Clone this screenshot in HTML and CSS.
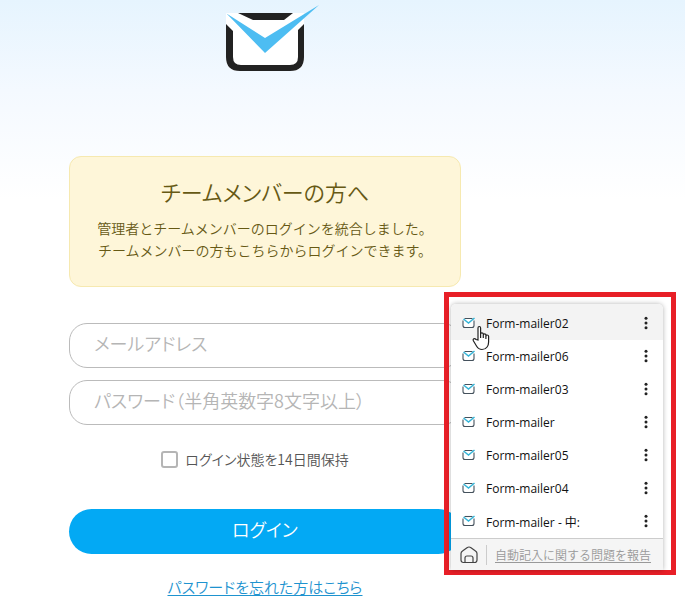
FILE: index.html
```
<!DOCTYPE html>
<html lang="ja">
<head>
    <meta charset="UTF-8">
    <meta name="viewport" content="width=device-width, initial-scale=1.0">
    <title>ログイン</title>
    <link rel="stylesheet" href="styles.css">
</head>
<body>
<svg class="symbols" width="0" height="0">
    <symbol id="mail" viewBox="0 0 14 12">
        <path d="M1 4v4.500q0 2 2 2h7q2 0 2-2V4L10.500 1.500h-8z" fill="#fff"/>
        <path d="M1 3.500v5q0 2 2 2h7q2 0 2-2v-5" fill="none" stroke="#44515c" stroke-width="1.100"/>
        <path d="M2.500 1.500h8" stroke="#44515c" stroke-width="1.100"/>
        <path d="M1.500 2l5 4L12.500 1" fill="none" stroke="#35b5d8" stroke-width="1.500"/>
    </symbol>
    <symbol id="dots" viewBox="0 0 4 14">
        <circle cx="2" cy="2.200" r="1.500"/>
        <circle cx="2" cy="7" r="1.500"/>
        <circle cx="2" cy="11.800" r="1.500"/>
    </symbol>
</svg>
<main class="page">
    <header class="logo">
        <svg width="108" height="72" viewBox="0 0 108 72">
            <path d="M15 13h78v44q0 14-12 14H27Q15 71 15 57z" fill="#fff"/>
            <path d="M27 13h55l-9 7H42z" fill="#222"/>
            <path d="M15 24l7 7v26q0 8 8 8h49q8 0 8-8V30l6-6v33q0 14-14 14H29Q15 71 15 57z" fill="#222"/>
            <path d="M15.500 13.500L54 38 108 5 54 53z" fill="#4dbdf2"/>
        </svg>
    </header>
    <section class="notice">
        <h1>チームメンバーの方へ</h1>
        <p>管理者とチームメンバーのログインを統合しました。<br>チームメンバーの方もこちらからログインできます。</p>
    </section>
    <form class="login">
        <input type="text" class="field" placeholder="メールアドレス" aria-label="メールアドレス">
        <input type="password" class="field" placeholder="パスワード（半角英数字8文字以上）" aria-label="パスワード">
        <div class="keep">
            <input type="checkbox" id="keep">
            <label for="keep">ログイン状態を14日間保持</label>
        </div>
        <button type="button" class="submit">ログイン</button>
        <a href="#" class="forgot">パスワードを忘れた方はこちら</a>
    </form>
</main>

<!-- 自動入力の候補 -->
<div class="frame">
    <div class="menu">
        <ul>
            <li class="on"><svg class="mail"><use href="#mail"/></svg><button type="button" class="name">Form-mailer02</button><button type="button" class="more" aria-label="メニュー"><svg><use href="#dots"/></svg></button></li>
            <li><svg class="mail"><use href="#mail"/></svg><button type="button" class="name">Form-mailer06</button><button type="button" class="more" aria-label="メニュー"><svg><use href="#dots"/></svg></button></li>
            <li><svg class="mail"><use href="#mail"/></svg><button type="button" class="name">Form-mailer03</button><button type="button" class="more" aria-label="メニュー"><svg><use href="#dots"/></svg></button></li>
            <li><svg class="mail"><use href="#mail"/></svg><button type="button" class="name">Form-mailer</button><button type="button" class="more" aria-label="メニュー"><svg><use href="#dots"/></svg></button></li>
            <li><svg class="mail"><use href="#mail"/></svg><button type="button" class="name">Form-mailer05</button><button type="button" class="more" aria-label="メニュー"><svg><use href="#dots"/></svg></button></li>
            <li><svg class="mail"><use href="#mail"/></svg><button type="button" class="name">Form-mailer04</button><button type="button" class="more" aria-label="メニュー"><svg><use href="#dots"/></svg></button></li>
            <li><svg class="mail"><use href="#mail"/></svg><button type="button" class="name">Form-mailer - 中:</button><button type="button" class="more" aria-label="メニュー"><svg><use href="#dots"/></svg></button></li>
        </ul>
        <div class="foot">
            <svg class="home" width="18" height="18" viewBox="0 0 18 18">
                <path d="M1 7.500Q1 6 2.500 5L7 1.700q2-1.400 4 0L15.500 5Q17 6 17 7.500V14q0 2.500-2.500 2.500h-11Q1 16.500 1 14z"/>
                <path d="M5 16.500V12q0-2 2-2h4q2 0 2 2v4.500"/>
            </svg>
            <a href="#">自動記入に関する問題を報告</a>
        </div>
    </div>
    <svg class="cursor" width="19" height="26" viewBox="0 0 19 26">
        <path d="M6 15V3q0-1.500 1.300-1.500T8.600 3v6q0-1.200 1.300-1.200T11.300 9v1q0-1.200 1.300-1.200T13.900 10v1.200q0-1.200 1.300-1.200t1.400 1.300V17q0 3-1.500 5-1.700 2.500-5.100 2.500T4.500 21L1.500 16q-.8-1.500.3-2.200 1-.6 2.300.7z"/>
        <path d="M8.600 9v4M11.300 10v3M13.900 11v3"/>
    </svg>
</div>
</body>
</html>
```
FILE: styles.css
```
*{
    box-sizing: border-box;
}
body{
    margin: 0;
    font-family: "Noto Sans CJK JP", sans-serif;
    font-feature-settings: "palt";
    font-size: 14px;
    font-weight: 350;
    color: #555;
    background: linear-gradient(#e6f4fe, #f4f9ff 90px, #fff 200px) no-repeat;
}
.symbols{
    position: absolute;
}
.page{
    max-width: 392px;
    margin-left: 69px;
}
.logo{
    height: 156px;
    text-align: center;
}
.notice{
    padding: 18px 16px 25px;
    border: 1px solid #f6e9b0;
    border-radius: 12px;
    background: #fef6d9;
    color: #665914;
    text-align: center;
}
.notice h1{
    margin: 0 0 10px;
    font-size: 22px;
    line-height: 32px;
    font-weight: 350;
}
.notice p{
    margin: 0;
    line-height: 22px;
    font-feature-settings: normal;
}
.login{
    display: flex;
    flex-direction: column;
    align-items: center;
    padding-top: 36px;
}
.field{
    width: 100%;
    height: 45px;
    margin-bottom: 12px;
    padding: 0 24px 6px;
    border: 1px solid #bbb;
    border-radius: 18px;
    background: #fff;
    font: inherit;
    font-size: 18px;
}
.field::placeholder{
    color: #b5b5b5;
}
.keep{
    display: flex;
    align-items: center;
    gap: 7px;
    height: 20px;
    margin: 12px 20px 40px 0;
}
.keep input{
    appearance: none;
    width: 17px;
    height: 17px;
    margin: 0;
    border: 2px solid #b5b5b5;
    border-radius: 3px;
    background: #fff;
}
.submit{
    width: 100%;
    height: 45px;
    padding: 0 0 6px;
    border: 0;
    border-radius: 23px;
    background: #03a9f4;
    color: #fff;
    font: inherit;
    font-size: 18px;
}
.forgot{
    margin-top: 23px;
    font-size: 15px;
    line-height: 20px;
    color: #1e93cf;
    text-underline-offset: 2px;
}
.frame{
    position: absolute;
    top: 292px;
    left: 444px;
    border: 5px solid #e81f27;
    padding: 7px 8px 0 2px;
    width: 232px;
}
.menu{
    border-radius: 5px 5px 0 0;
    background: #fff;
    box-shadow: 0 0 5px rgba(0, 0, 0, .3);
    overflow: hidden;
}
.menu ul{
    margin: 0;
    padding: 0;
    border-top: 3px solid #f3f3f3;
    list-style: none;
}
.menu li{
    display: flex;
    align-items: center;
    height: 33px;
    padding: 0 15px 2px 11px;
}
.menu .on{
    background: #f3f3f3;
}
.mail{
    width: 14px;
    height: 12px;
    margin-right: 10px;
}
.name{
    flex: 1;
    padding: 2px 0 0;
    border: 0;
    background: none;
    font: 12px "Open Sans", "Noto Sans CJK JP", sans-serif;
    color: #111;
    text-align: left;
}
.more{
    display: flex;
    padding: 0;
    border: 0;
    background: none;
}
.more svg{
    width: 4px;
    height: 14px;
    fill: #222;
}
.foot{
    display: flex;
    align-items: center;
    height: 32px;
    padding-left: 9px;
    border-top: 1px solid #ccc;
    background: #f5f5f5;
}
.home{
    fill: none;
    stroke: #444;
    stroke-width: 1.2;
}
.foot a{
    margin-left: 8px;
    padding-left: 8px;
    border-left: 1px solid #ccc;
    font-size: 12px;
    line-height: 20px;
    font-feature-settings: normal;
    color: #999;
    text-underline-offset: 2px;
}
.cursor{
    position: absolute;
    top: 28px;
    left: 23px;
    fill: #fff;
    stroke: #222;
    stroke-width: 1.2;
}
```
